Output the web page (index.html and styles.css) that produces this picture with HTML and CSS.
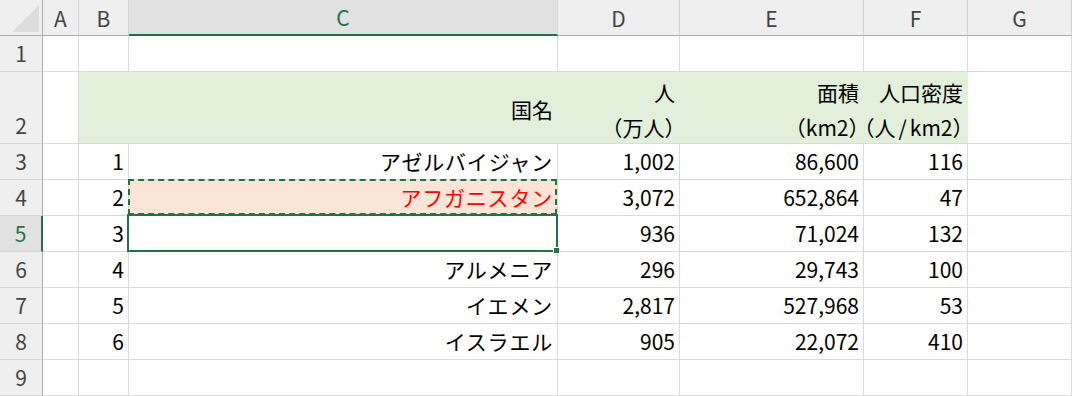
FILE: index.html
```html
<!DOCTYPE html>
<html lang="ja">
<head>
<meta charset="utf-8">
<link rel="stylesheet" href="styles.css">
</head>
<body>
<div class="sheet">
  <div class="grid">
    <div class="corner"><span class="tri"></span></div>
    <div class="ch">A</div>
    <div class="ch">B</div>
    <div class="ch ch-sel">C</div>
    <div class="ch">D</div>
    <div class="ch">E</div>
    <div class="ch">F</div>
    <div class="ch ch-last">G</div>

    <div class="rh">1</div>
    <div class="c"></div><div class="c"></div><div class="c"></div><div class="c"></div><div class="c"></div><div class="c"></div><div class="c"></div>

    <div class="rh rh-bottom">2</div>
    <div class="c"></div>
    <div class="c fill"></div>
    <div class="c fill mid">国名</div>
    <div class="c fill two"><span>人</span><span class="paren">（万人）</span></div>
    <div class="c fill two"><span>面積</span><span class="paren">（km2）</span></div>
    <div class="c fill two"><span>人口密度</span><span class="paren">（人<span class="slash">/</span>km2）</span></div>
    <div class="c"></div>

    <div class="rh">3</div>
    <div class="c"></div><div class="c">1</div><div class="c kana">アゼルバイジャン</div><div class="c">1,002</div><div class="c">86,600</div><div class="c">116</div><div class="c"></div>

    <div class="rh">4</div>
    <div class="c"></div><div class="c">2</div><div class="c kana peach">アフガニスタン</div><div class="c">3,072</div><div class="c">652,864</div><div class="c">47</div><div class="c"></div>

    <div class="rh rh-sel">5</div>
    <div class="c"></div><div class="c">3</div><div class="c"></div><div class="c">936</div><div class="c">71,024</div><div class="c">132</div><div class="c"></div>

    <div class="rh">6</div>
    <div class="c"></div><div class="c">4</div><div class="c kana">アルメニア</div><div class="c">296</div><div class="c">29,743</div><div class="c">100</div><div class="c"></div>

    <div class="rh">7</div>
    <div class="c"></div><div class="c">5</div><div class="c kana">イエメン</div><div class="c">2,817</div><div class="c">527,968</div><div class="c">53</div><div class="c"></div>

    <div class="rh">8</div>
    <div class="c"></div><div class="c">6</div><div class="c kana">イスラエル</div><div class="c">905</div><div class="c">22,072</div><div class="c">410</div><div class="c"></div>

    <div class="rh">9</div>
    <div class="c"></div><div class="c"></div><div class="c"></div><div class="c"></div><div class="c"></div><div class="c"></div><div class="c"></div>
  </div>
  <div class="marquee"></div>
  <div class="selection"><span class="handle"></span></div>
</div>
</body>
</html>
```

FILE: styles.css
```css
html, body {
  margin: 0;
  padding: 0;
  background: #ffffff;
}
body {
  font-family: "Noto Sans CJK JP", "Noto Sans", sans-serif;
  font-size: 21px;
  color: #000;
}
.sheet {
  position: relative;
  width: 1072px;
  height: 396px;
  overflow: hidden;
}
.grid {
  display: grid;
  grid-template-columns: 43px 36px 50px 429px 122px 184px 104px 104px;
  grid-template-rows: 36px 36px 72px 36px 36px 36px 36px 36px 36px 36px;
}
.grid > div {
  box-sizing: border-box;
}
.corner {
  position: relative;
  background: #efefef;
  border-right: 1px solid #ababab;
  border-bottom: 1px solid #ababab;
}
.tri {
  position: absolute;
  right: 3px;
  bottom: 3px;
  width: 0;
  height: 0;
  border-left: 27px solid transparent;
  border-bottom: 27px solid #dcdcdc;
}
.ch {
  background: #efefef;
  color: #444;
  font-size: 21px;
  display: flex;
  align-items: center;
  justify-content: center;
  border-right: 1px solid #d4d4d4;
  border-bottom: 1px solid #ababab;
}
.ch-sel {
  background: #e1e1e1;
  color: #217346;
  border-bottom: 2px solid #217346;
}
.rh {
  background: #efefef;
  color: #444;
  display: flex;
  align-items: center;
  justify-content: center;
  border-right: 1px solid #ababab;
  border-bottom: 1px solid #d4d4d4;
  line-height: 35px;
}
.rh-bottom {
  align-items: flex-end;
}
.rh-sel {
  background: #e1e1e1;
  color: #217346;
  border-right: 2px solid #217346;
}
.c {
  display: flex;
  align-items: center;
  justify-content: flex-end;
  padding-right: 4px;
  border-right: 1px solid #dadada;
  border-bottom: 1px solid #dadada;
  white-space: nowrap;
  line-height: 35px;
}
.kana {
  letter-spacing: 0.8px;
}
.fill {
  background: #e2efda;
  border-right-color: #e2efda;
  padding-top: 4px;
}
.two {
  flex-direction: column;
  align-items: flex-end;
  justify-content: center;
}
.paren {
  font-feature-settings: "halt";
}
.slash {
  padding: 0 3px;
}
.peach {
  background: #fce4d6;
  color: #ff0000;
}
.marquee {
  position: absolute;
  left: 128px;
  top: 179px;
  width: 429px;
  height: 36px;
  box-sizing: border-box;
  border: 2px dashed #217346;
}
.selection {
  position: absolute;
  left: 127px;
  top: 214px;
  width: 431px;
  height: 38px;
  box-sizing: border-box;
  border: 2px solid #217346;
}
.handle {
  position: absolute;
  right: -4px;
  bottom: -4px;
  width: 7px;
  height: 7px;
  background: #217346;
  border: 1px solid #ffffff;
  box-sizing: border-box;
}
```
